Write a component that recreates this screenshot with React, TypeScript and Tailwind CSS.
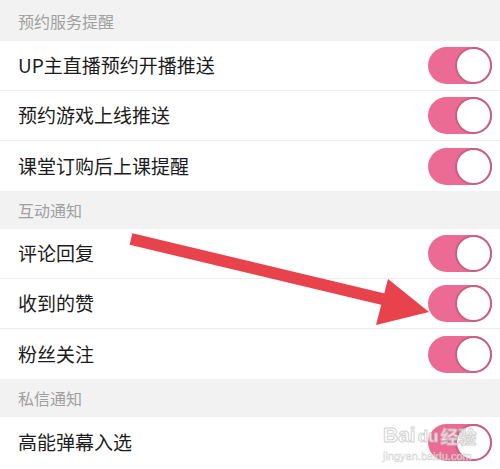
import React from 'react'

type Item = { label: string }
type Section = { title: string; items: Item[]; first?: boolean }

const sections: Section[] = [
  {
    title: '预约服务提醒',
    first: true,
    items: [{ label: 'UP主直播预约开播推送' }, { label: '预约游戏上线推送' }, { label: '课堂订购后上课提醒' }],
  },
  {
    title: '互动通知',
    items: [{ label: '评论回复' }, { label: '收到的赞' }, { label: '粉丝关注' }],
  },
  {
    title: '私信通知',
    items: [{ label: '高能弹幕入选' }],
  },
]

const Toggle = () => (
  <div className="relative w-[64px] h-[37px] rounded-full bg-[#ec6b94]">
    <div className="absolute right-0 top-0 w-[37px] h-[37px] rounded-full bg-white border-2 border-[#c95f84]" />
  </div>
)

export default function App() {
  return (
    <div
      className="relative w-[500px] h-[469px] overflow-hidden bg-white"
      style={{ fontFamily: '"Noto Sans CJK SC", "Noto Sans", sans-serif' }}
    >
      {sections.map((section) => (
        <div key={section.title}>
          <div
            className={`flex items-center bg-[#f2f2f2] pl-[18px] text-[16px] text-[#a0a0a0] ${
              section.first ? 'h-[41px]' : 'h-[38px]'
            }`}
          >
            {section.title}
          </div>
          {section.items.map((item, i) => (
            <div
              key={item.label}
              className={`flex items-center justify-between h-[50px] pl-[18px] pr-[8px] ${
                i < section.items.length - 1 ? 'border-b border-[#ececec]' : ''
              }`}
            >
              <span className="text-[19px] text-[#1c1c1c]">{item.label}</span>
              <Toggle />
            </div>
          ))}
        </div>
      ))}

      {/* red arrow */}
      <svg className="absolute left-0 top-0" width="500" height="469" viewBox="0 0 500 469">
        <line x1="131" y1="239" x2="395" y2="302" stroke="#e8434c" strokeWidth="12" />
        <polygon points="388,279 429,312 376,325" fill="#e8434c" />
      </svg>

      {/* watermark */}
      <div className="absolute left-[383px] top-[424px] flex flex-col items-start leading-none opacity-80">
        <div className="flex items-end gap-[2px] text-[21px] font-bold text-white [-webkit-text-stroke:1px_#c8c8c8]">
          <span style={{ fontFamily: '"Liberation Sans", sans-serif' }}>Bai</span>
          <span className="text-[17px]" style={{ fontFamily: '"Liberation Sans", sans-serif' }}>
            du
          </span>
          <span className="text-[18px]">经验</span>
        </div>
        <span
          className="mt-[6px] text-[11px] text-white [-webkit-text-stroke:0.5px_#c8c8c8]"
          style={{ fontFamily: '"Liberation Sans", sans-serif' }}
        >
          jingyan.baidu.com
        </span>
      </div>
    </div>
  )
}
